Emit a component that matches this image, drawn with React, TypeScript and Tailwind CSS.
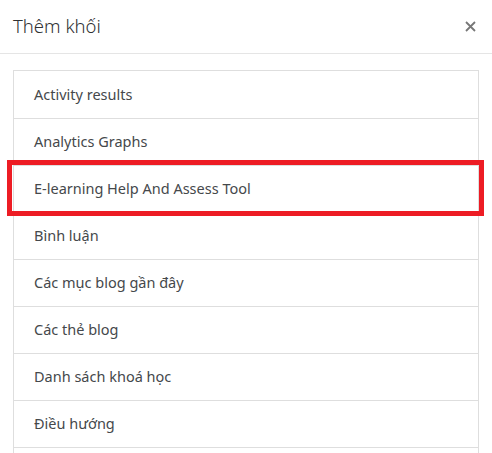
import React from 'react';

const blocks = [
  'Activity results',
  'Analytics Graphs',
  'E-learning Help And Assess Tool',
  'Bình luận',
  'Các mục blog gần đây',
  'Các thẻ blog',
  'Danh sách khoá học',
  'Điều hướng',
];

export default function App() {
  return (
    <div
      className="relative h-[453px] w-[492px] overflow-hidden bg-white text-[#45484b]"
      style={{ fontFamily: '"Noto Sans", "Open Sans", sans-serif' }}
    >
      {/* Header */}
      <div className="flex h-[54px] items-center justify-between border-b border-[#e5e5e5] pl-[13px] pr-[16px]">
        <h5 className="text-[18.5px] font-light leading-none text-[#2f3133]">Thêm khối</h5>
        <button className="flex h-[11px] w-[11px] items-center justify-center text-[#777]">
          <svg width="11" height="11" viewBox="0 0 11 11">
            <path d="M1 1 L10 10 M10 1 L1 10" stroke="currentColor" strokeWidth="1.8" />
          </svg>
        </button>
      </div>

      {/* Body */}
      <div className="px-[13px] pt-[16px]">
        <div className="border border-[#dedede]">
          {blocks.map((name, i) => (
            <div
              key={i}
              className={`flex h-[47px] items-center pl-[20px] text-[14.5px] ${i > 0 ? 'border-t border-[#dedede]' : 'h-[46px]'}`}
            >
              {name}
            </div>
          ))}
          {/* next row, below the fold */}
          <div className="h-[47px] border-t border-[#dedede]" />
        </div>
      </div>

      {/* Highlight annotation */}
      <div className="pointer-events-none absolute left-[7px] top-[160px] h-[56px] w-[477px] border-[5px] border-[#ed1c24]" />
    </div>
  );
}
